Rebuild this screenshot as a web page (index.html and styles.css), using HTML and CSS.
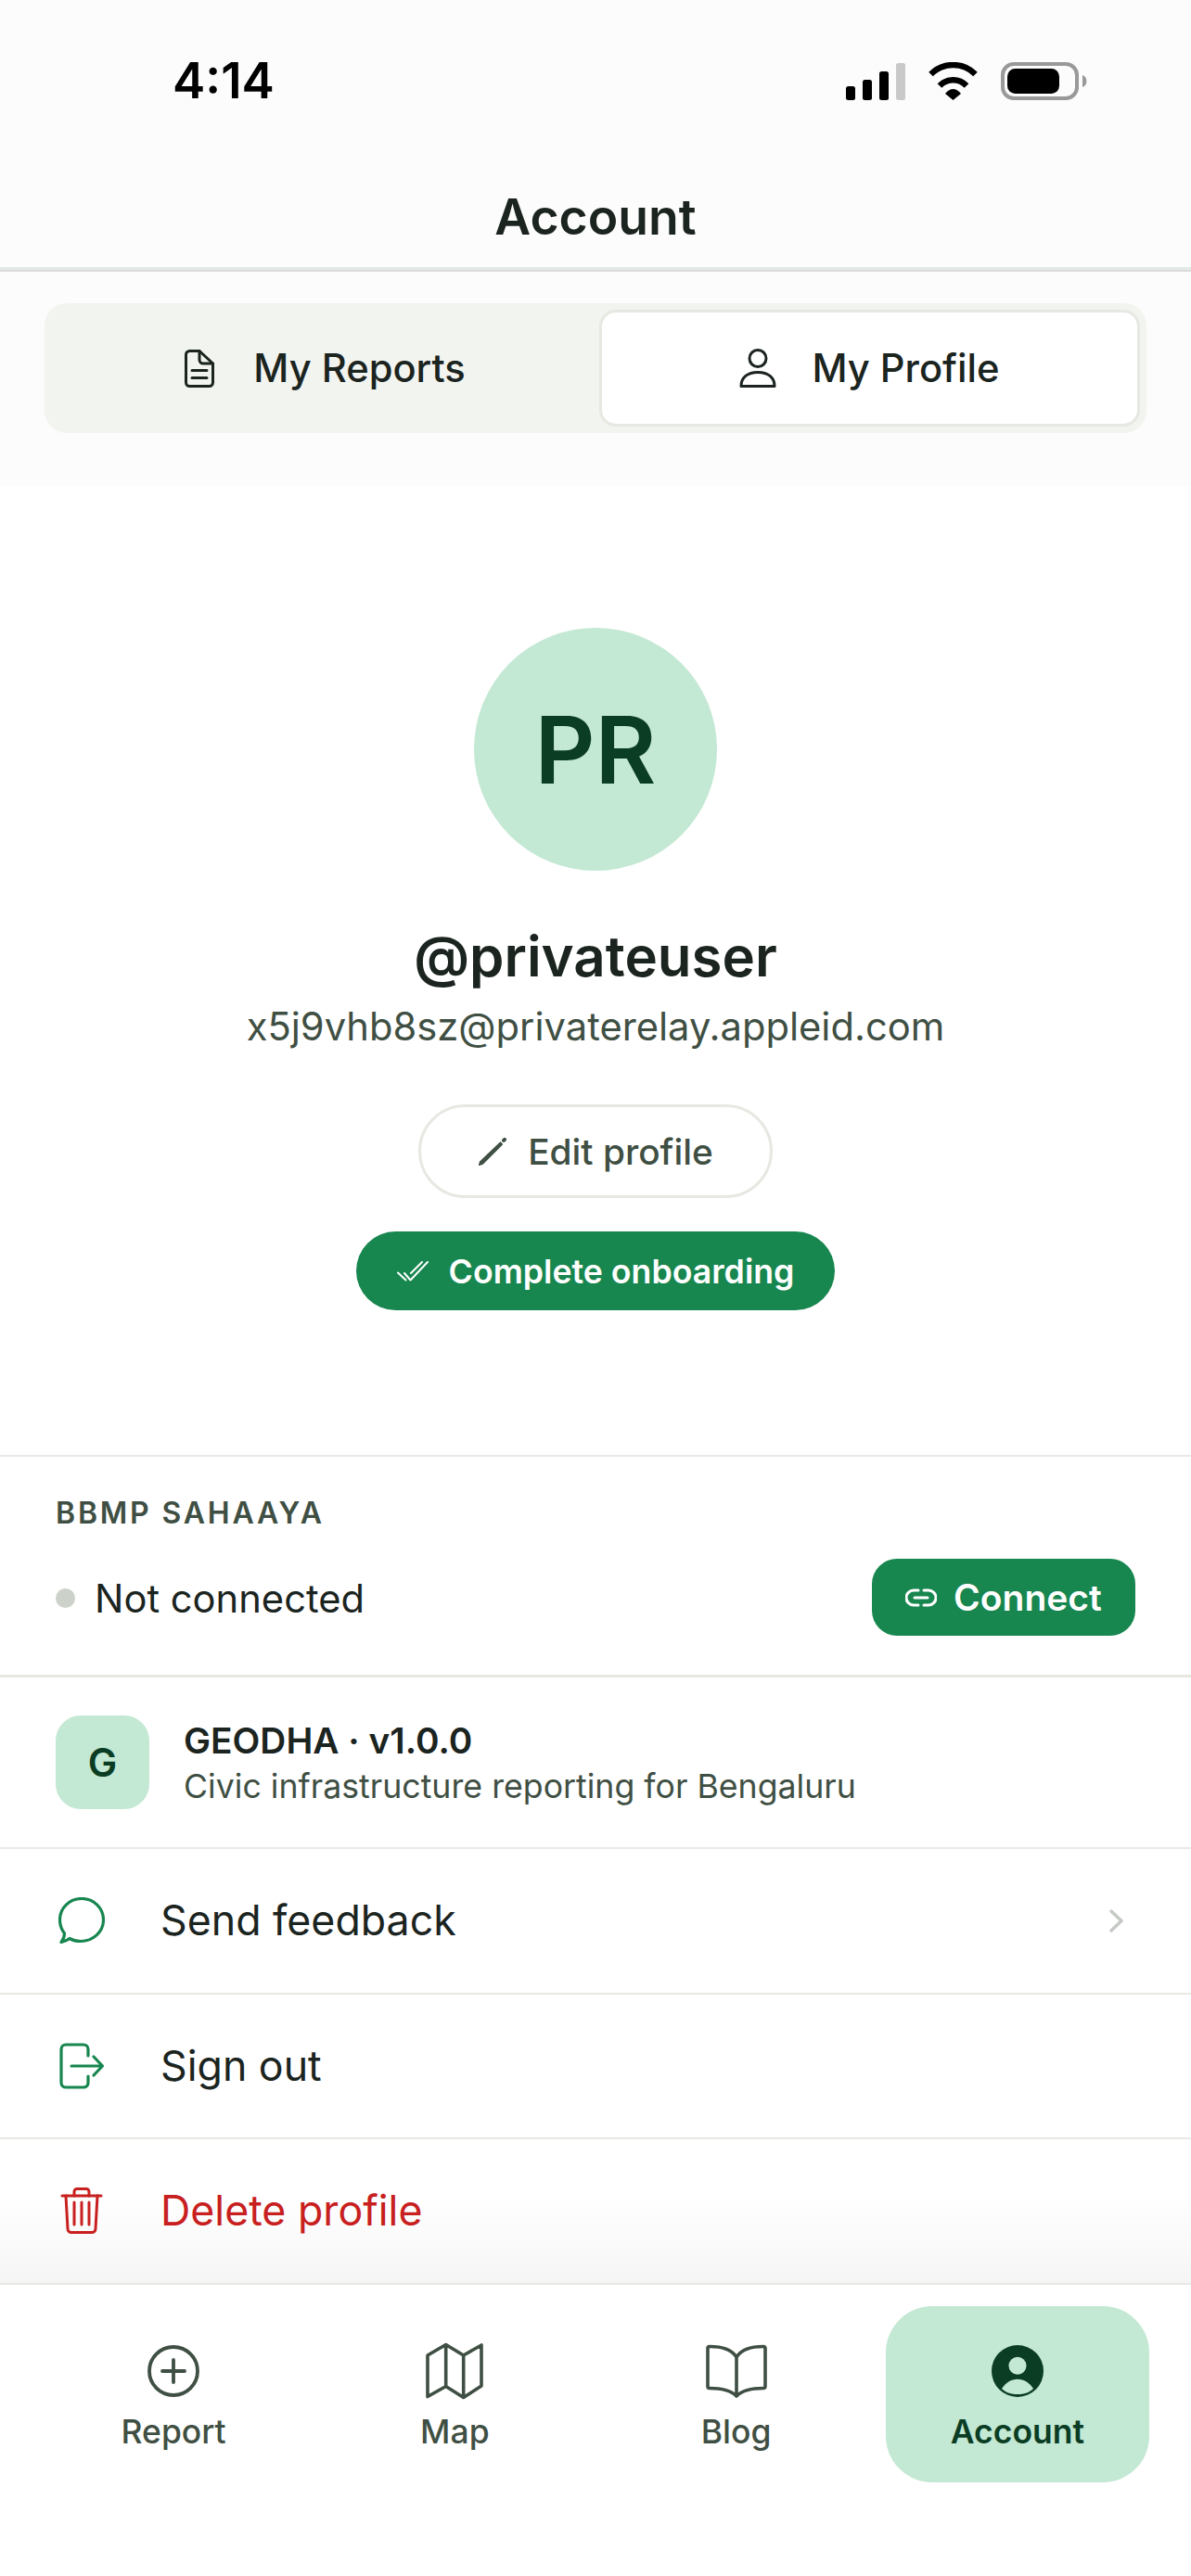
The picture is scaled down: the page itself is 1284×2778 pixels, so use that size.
FILE: index.html
```html
<!DOCTYPE html>
<html lang="en">
<head>
    <meta charset="UTF-8">
    <meta name="viewport" content="width=device-width, initial-scale=1.0">
    <title>Account</title>
    <link rel="stylesheet" href="styles.css">
</head>
<body>
    <header class="top">
        <div class="status">
            <span class="clock">4:14</span>
            <div class="status-icons">
                <svg width="64" height="40" viewBox="0 0 64 40">
                    <rect x="0" y="25" width="10" height="15" rx="2.5"/>
                    <rect x="18" y="18" width="10" height="22" rx="2.5"/>
                    <rect x="36" y="9" width="10" height="31" rx="2.5"/>
                    <rect x="54" y="0" width="10" height="40" rx="2.5" fill="#c9c9c9"/>
                </svg>
                <svg width="57" height="41" viewBox="0 0 57 41">
                    <path d="M4.5 13A34 34 0 0 1 52.5 13" fill="none" stroke="#000" stroke-width="6.5"/>
                    <path d="M14 25.5A20 20 0 0 1 43 25.5" fill="none" stroke="#000" stroke-width="6.5"/>
                    <path d="M20 34Q28.5 24 37 34L28.5 41Z"/>
                </svg>
                <svg width="93" height="41" viewBox="0 0 93 41">
                    <rect x="2" y="2" width="80" height="37" rx="12" fill="none" stroke="#999" stroke-width="4"/>
                    <rect x="7" y="7" width="56" height="27" rx="8.5"/>
                    <path d="M88 14a7 7 0 0 1 0 13Z" fill="#999"/>
                </svg>
            </div>
        </div>
        <h1 class="title">Account</h1>
    </header>

    <div class="tabs-wrap">
        <div class="tabs">
            <div class="tab">
                <svg width="32" height="41" viewBox="0 0 32 41" fill="none" stroke="#1b241f" stroke-width="3" stroke-linejoin="round" stroke-linecap="round">
                    <path d="M5.5 1.5H16L30.5 15V35.500A4 4 0 0 1 26.5 39.5H5.5A4 4 0 0 1 1.5 35.500V5.5A4 4 0 0 1 5.5 1.5Z"/>
                    <path d="M16 1.5V11A4 4 0 0 0 20 15H30.5"/>
                    <path d="M8 22.5H24M8 30.5H24"/>
                </svg>
                <span>My Reports</span>
            </div>
            <div class="tab active">
                <svg width="40" height="42" viewBox="0 0 40 42" fill="none" stroke="#1b241f" stroke-width="3" stroke-linejoin="round">
                    <circle cx="20" cy="10.5" r="9"/>
                    <path d="M2 40.5C2 31 9 25.5 20 25.5S38 31 38 40.5Z"/>
                </svg>
                <span>My Profile</span>
            </div>
        </div>
    </div>

    <section class="profile">
        <div class="avatar">PR</div>
        <div class="username">@privateuser</div>
        <div class="email">x5j9vhb8sz@privaterelay.appleid.com</div>
        <div class="edit-btn">
            <svg width="32" height="32" viewBox="0 0 32 32" fill="#3f4f43" stroke="#3f4f43" stroke-linecap="round" stroke-linejoin="round">
                <path d="M1.5 30.5L2.5 27L24.500 6L26.500 8L5 29.500Z" stroke-width="1.2"/>
                <path d="M28 3.8L29 2.8" fill="none" stroke-width="4"/>
            </svg>
            <span>Edit profile</span>
        </div>
        <div class="onboard-btn">
            <svg width="34" height="22" viewBox="0 0 34 22" fill="none" stroke="#fff" stroke-width="2" stroke-linecap="round" stroke-linejoin="round">
                <path d="M1 12.5L9.5 20.5M8 13L14.5 20.5L33 1M15 13L27 1"/>
            </svg>
            <span>Complete onboarding</span>
        </div>
    </section>

    <section class="bbmp">
        <div class="label">BBMP SAHAAYA</div>
        <div class="bbmp-row">
            <div class="conn-state">
                <span class="dot"></span>
                <span>Not connected</span>
            </div>
            <div class="connect-btn">
                <svg width="34" height="20" viewBox="0 0 34 20" fill="none" stroke="#fff" stroke-width="3" stroke-linecap="round">
                    <path d="M14 2H9A8 8 0 0 0 9 18H14M20 2H25A8 8 0 0 1 25 18H20M10 10H24"/>
                </svg>
                <span>Connect</span>
            </div>
        </div>
    </section>

    <section class="about">
        <div class="app-icon">G</div>
        <div>
            <div class="app-name">GEODHA · v1.0.0</div>
            <div class="app-desc">Civic infrastructure reporting for Bengaluru</div>
        </div>
    </section>

    <div class="row">
        <svg class="row-icon" width="50" height="50" viewBox="0 0 50 50" fill="none" stroke="#17864f" stroke-width="3.2" stroke-linejoin="round">
            <path d="M3 48.5C5 48 9.5 46.5 12 44.5C15.5 46.5 20 47.5 24 47.5C37 47.5 48.5 37.5 48.5 24.5C48.5 11.5 38 1.5 25 1.5C12 1.5 1.5 11.5 1.5 24.5C1.5 30 3.5 35 6.5 39C6.5 42.5 4.5 46.5 3 48.5Z"/>
        </svg>
        <span class="row-text">Send feedback</span>
        <svg class="chevron" width="17" height="27" viewBox="0 0 17 27" fill="none" stroke="#c5cac5" stroke-width="3.5" stroke-linecap="round" stroke-linejoin="round">
            <path d="M3 3L14 13.5L3 24"/>
        </svg>
    </div>
    <div class="row">
        <svg class="row-icon" width="50" height="50" viewBox="0 0 50 50" fill="none" stroke="#17864f" stroke-width="3.2" stroke-linejoin="round" stroke-linecap="round">
            <path d="M32 14V7A5 5 0 0 0 27 2H8A5 5 0 0 0 3 7V43A5 5 0 0 0 8 48H27A5 5 0 0 0 32 43V36"/>
            <path d="M14 25H47M38 15L47.5 25L38 35"/>
        </svg>
        <span class="row-text">Sign out</span>
    </div>
    <div class="row last">
        <svg class="row-icon" width="50" height="50" viewBox="0 0 50 50" fill="none" stroke="#c8201f" stroke-width="3" stroke-linejoin="round" stroke-linecap="round">
            <path d="M4 9H46"/>
            <path d="M17 9V4.5A3 3 0 0 1 20 1.5H30A3 3 0 0 1 33 4.5V9"/>
            <path d="M8 9L10 44.5A4 4 0 0 0 14 48.5H36A4 4 0 0 0 40 44.5L42 9"/>
            <path d="M17 16V40M25 16V40M33 16V40"/>
        </svg>
        <span class="row-text">Delete profile</span>
    </div>

    <nav class="nav">
        <div class="nav-item">
            <svg width="72" height="72" viewBox="0 0 72 72" fill="none" stroke="#3f4f43" stroke-width="3.8" stroke-linecap="round">
                <circle cx="36" cy="36" r="26"/>
                <path d="M36 24V48M24 36H48"/>
            </svg>
            <span>Report</span>
        </div>
        <div class="nav-item">
            <svg width="72" height="72" viewBox="0 0 72 72" fill="none" stroke="#3f4f43" stroke-width="3.6" stroke-linejoin="round">
                <path d="M7 19L26.7 7.5L45.7 19L65 8V52L45.7 64.5L26.7 52.5L7 63.5ZM26.7 7.5V52.5M45.7 19V64.5"/>
            </svg>
            <span>Map</span>
        </div>
        <div class="nav-item">
            <svg width="72" height="72" viewBox="0 0 72 72" fill="none" stroke="#3f4f43" stroke-width="3.6" stroke-linejoin="round">
                <path d="M36 21C31 13 20 9.5 7 9.5Q5 9.5 5 11.5V52.5Q5 54.5 7 54.5C20 54.5 30 57 36 63C42 57 52 54.5 65 54.5Q67 54.5 67 52.5V11.5Q67 9.5 65 9.5C52 9.5 41 13 36 21ZM36 21V63"/>
            </svg>
            <span>Blog</span>
        </div>
        <div class="nav-item active">
            <svg width="72" height="72" viewBox="0 0 72 72">
                <circle cx="36" cy="36" r="28" fill="#0a3d24"/>
                <circle cx="36" cy="30.3" r="9.5" fill="#c3e8d3"/>
                <path d="M19 55C23 48.5 29 44.7 36 44.7C43 44.7 49 48.5 53 55C48.5 59.5 42.5 61 36 61C29.5 61 23.5 59.5 19 55Z" fill="#c3e8d3"/>
            </svg>
            <span>Account</span>
        </div>
    </nav>
</body>
</html>
```

FILE: styles.css
```css
* {
    box-sizing: border-box;
}
body {
    margin: 0;
    width: 1284px;
    height: 2778px;
    overflow: hidden;
    background: #fff;
    color: #1b241f;
    font-family: Inter, "Liberation Sans", sans-serif;
}
.top {
    position: relative;
    background: #fcfcfc;
    border-bottom: 3px solid #e3eae5;
    box-shadow: 0 2px 0 #d9dad9;
}
.status {
    height: 174px;
    padding: 0 112px 0 186px;
    display: flex;
    justify-content: space-between;
    align-items: center;
}
.clock {
    font-size: 53px;
    font-weight: 600;
    color: #000;
}
.status-icons {
    display: flex;
    align-items: flex-end;
    gap: 23px;
}
.title {
    margin: 0;
    height: 114px;
    line-height: 120px;
    text-align: center;
    font-size: 53.5px;
    font-weight: 600;
}
.tabs-wrap {
    background: #fcfcfc;
    padding: 36px 48px 57px;
}
.tabs {
    display: grid;
    grid-template-columns: 1fr 583px;
    height: 140px;
    padding: 7px;
    background: #f2f4ef;
    border-radius: 24px;
}
.tab {
    display: flex;
    align-items: center;
    justify-content: center;
    gap: 42px;
    font-size: 41.7px;
    font-weight: 500;
}
.tab.active {
    gap: 38px;
    background: #fff;
    border: 3px solid #e6e8e1;
    border-radius: 18px;
}
.profile {
    height: 1045px;
    padding-top: 153px;
    display: flex;
    flex-direction: column;
    align-items: center;
}
.avatar {
    width: 262px;
    height: 262px;
    border-radius: 50%;
    background: #c3e8d3;
    color: #0a3d24;
    font-size: 101px;
    font-weight: 600;
    line-height: 262px;
    text-align: center;
}
.username {
    margin-top: 54px;
    font-size: 60px;
    line-height: 76px;
    font-weight: 600;
}
.email {
    margin-top: 12px;
    font-size: 41.7px;
    line-height: 52px;
    color: #3f4f43;
}
.edit-btn {
    margin-top: 58px;
    width: 382px;
    height: 101px;
    border: 3px solid #e6e8e1;
    border-radius: 51px;
    display: flex;
    align-items: center;
    justify-content: center;
    gap: 22px;
    font-size: 38.8px;
    font-weight: 500;
    color: #3f4f43;
}
.onboard-btn {
    margin-top: 36px;
    width: 516px;
    height: 85px;
    border-radius: 43px;
    background: #17864f;
    color: #fff;
    display: flex;
    align-items: center;
    justify-content: center;
    gap: 22px;
    font-size: 35.7px;
    font-weight: 600;
}
.bbmp {
    height: 240px;
    padding: 42px 60px 0;
    border-top: 2px solid #e8e9e4;
    border-bottom: 3px solid #e6e8e1;
}
.label {
    font-size: 32px;
    line-height: 38px;
    font-weight: 600;
    letter-spacing: 2.8px;
    color: #3f4f43;
}
.bbmp-row {
    margin-top: 30px;
    display: flex;
    justify-content: space-between;
    align-items: center;
}
.conn-state {
    display: flex;
    align-items: center;
    gap: 21px;
    padding-top: 2px;
    font-size: 41.7px;
}
.dot {
    width: 21px;
    height: 21px;
    border-radius: 50%;
    background: #ccd2c9;
}
.connect-btn {
    width: 284px;
    height: 83px;
    border-radius: 27px;
    background: #17864f;
    color: #fff;
    display: flex;
    align-items: center;
    justify-content: center;
    gap: 18px;
    font-size: 39px;
    font-weight: 600;
}
.about {
    height: 185px;
    padding: 0 60px;
    display: flex;
    align-items: center;
    gap: 37px;
    border-bottom: 2px solid #e8e9e4;
}
.app-icon {
    width: 101px;
    height: 101px;
    border-radius: 27px;
    background: #c3e8d3;
    color: #0a3d24;
    font-size: 42px;
    font-weight: 600;
    line-height: 101px;
    text-align: center;
}
.app-name {
    font-size: 38.8px;
    line-height: 50px;
    font-weight: 600;
}
.app-desc {
    font-size: 35.7px;
    line-height: 48px;
    color: #3f4f43;
}
.row {
    height: 156.5px;
    padding: 0 72px 0 63px;
    display: flex;
    align-items: center;
    border-bottom: 2px solid #e8e9e4;
}
.row-text {
    margin-left: 60px;
    flex: 1;
    font-size: 44.7px;
}
.row.last {
    background: linear-gradient(#fff 40%, #f5f5f5);
}
.row.last .row-text {
    color: #c8201f;
}
.nav {
    padding: 23.5px 45px 0;
    display: grid;
    grid-template-columns: repeat(4, 1fr);
    column-gap: 19px;
}
.nav-item {
    height: 190px;
    padding-top: 34px;
    border-radius: 50px;
    display: flex;
    flex-direction: column;
    align-items: center;
    font-size: 35.5px;
    font-weight: 500;
    color: #3f4f43;
}
.nav-item span {
    line-height: 44px;
    margin-top: 8px;
}
.nav-item.active {
    background: #c3e8d3;
    color: #0a3d24;
    font-weight: 600;
}
```
